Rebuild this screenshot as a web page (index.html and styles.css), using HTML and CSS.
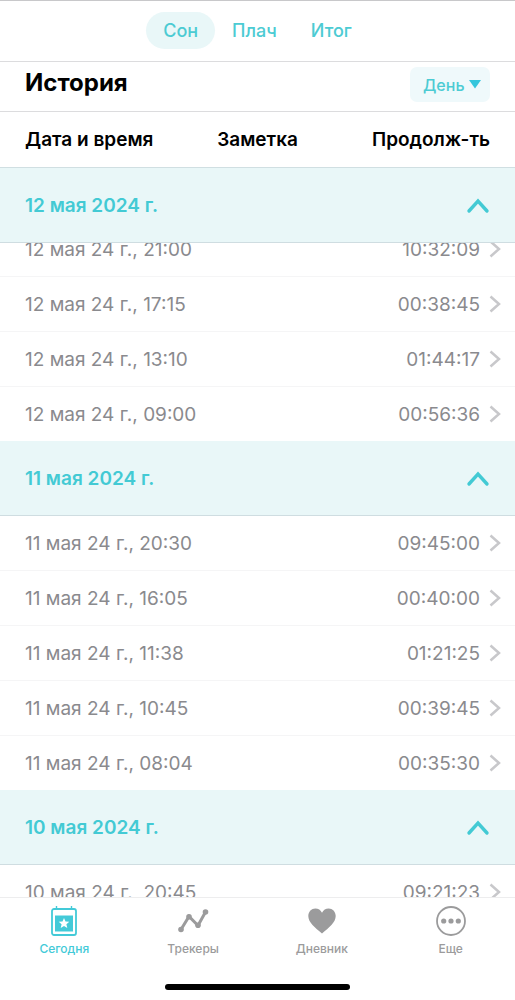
FILE: index.html
```html
<!DOCTYPE html>
<html lang="ru">
<head>
<meta charset="utf-8">
<meta name="viewport" content="width=device-width, initial-scale=1">
<title>История</title>
<link rel="stylesheet" href="styles.css">
</head>
<body>
<svg class="defs" aria-hidden="true">
  <symbol id="up" viewBox="0 0 24 18"><path d="M3 15 12 5 21 15" fill="none" stroke="currentColor" stroke-width="3.400" stroke-linecap="round"/></symbol>
  <symbol id="next" viewBox="0 0 12 18"><path d="M1.500 1.500 10 9 1.500 16.500" fill="none" stroke="currentColor" stroke-width="2.500"/></symbol>
</svg>
<div class="app">
  <nav class="tabs">
    <button class="tab tab-active" type="button">Сон</button>
    <button class="tab" type="button">Плач</button>
    <button class="tab" type="button">Итог</button>
  </nav>
  <header class="heading">
    <h1 class="title">История</h1>
    <div class="period">
      <select class="period-select" aria-label="Период"><option>День</option></select>
      <svg class="period-arrow" viewBox="0 0 12 10" aria-hidden="true"><path d="M0 1h12L6 9.500z" fill="currentColor"/></svg>
    </div>
  </header>
  <main class="history">
    <table class="log">
      <thead>
        <tr class="columns"><th>Дата и время</th><th>Заметка</th><th class="right">Продолж-ть</th></tr>
      </thead>
      <tbody class="group group-scrolled">
        <tr class="day"><th colspan="3"><button class="day-button" type="button">12 мая 2024 г.<svg class="up"><use href="#up"/></svg></button></th></tr>
        <tr class="entry"><td>12 мая 24 г., 21:00</td><td></td><td class="duration">10:32:09<svg class="next"><use href="#next"/></svg></td></tr>
        <tr class="entry"><td>12 мая 24 г., 17:15</td><td></td><td class="duration">00:38:45<svg class="next"><use href="#next"/></svg></td></tr>
        <tr class="entry"><td>12 мая 24 г., 13:10</td><td></td><td class="duration">01:44:17<svg class="next"><use href="#next"/></svg></td></tr>
        <tr class="entry"><td>12 мая 24 г., 09:00</td><td></td><td class="duration">00:56:36<svg class="next"><use href="#next"/></svg></td></tr>
      </tbody>
      <tbody class="group">
        <tr class="day"><th colspan="3"><button class="day-button" type="button">11 мая 2024 г.<svg class="up"><use href="#up"/></svg></button></th></tr>
        <tr class="entry"><td>11 мая 24 г., 20:30</td><td></td><td class="duration">09:45:00<svg class="next"><use href="#next"/></svg></td></tr>
        <tr class="entry"><td>11 мая 24 г., 16:05</td><td></td><td class="duration">00:40:00<svg class="next"><use href="#next"/></svg></td></tr>
        <tr class="entry"><td>11 мая 24 г., 11:38</td><td></td><td class="duration">01:21:25<svg class="next"><use href="#next"/></svg></td></tr>
        <tr class="entry"><td>11 мая 24 г., 10:45</td><td></td><td class="duration">00:39:45<svg class="next"><use href="#next"/></svg></td></tr>
        <tr class="entry"><td>11 мая 24 г., 08:04</td><td></td><td class="duration">00:35:30<svg class="next"><use href="#next"/></svg></td></tr>
      </tbody>
      <tbody class="group">
        <tr class="day"><th colspan="3"><button class="day-button" type="button">10 мая 2024 г.<svg class="up"><use href="#up"/></svg></button></th></tr>
        <tr class="entry"><td>10 мая 24 г., 20:45</td><td></td><td class="duration">09:21:23<svg class="next"><use href="#next"/></svg></td></tr>
      </tbody>
    </table>
  </main>
  <footer class="bottom">
    <nav class="menu">
      <a class="menu-item menu-active" href="#today">
        <svg class="menu-icon" viewBox="0 0 32 32" aria-hidden="true"><rect x="4" y="4" width="24" height="26" rx="2" fill="none" stroke="currentColor" stroke-width="1.800"/><path d="M8.500 1v4M23.500 1v4" stroke="currentColor" stroke-width="1.400"/><path d="M7 10.500h18v16H7z" fill="currentColor"/><path d="m16 13 1.500 3.500 3.800.3-2.900 2.500.9 3.700-3.300-2-3.300 2 .9-3.700-2.900-2.500 3.800-.3z" fill="#fff"/></svg>
        Сегодня
      </a>
      <a class="menu-item" href="#trackers">
        <svg class="menu-icon" viewBox="0 0 32 32" aria-hidden="true"><path d="m4 24.500 8-13 9 9L28.500 7" fill="none" stroke="currentColor" stroke-width="3"/><g fill="currentColor"><circle cx="4" cy="24.500" r="2.800"/><circle cx="12" cy="11.700" r="2.800"/><circle cx="21" cy="20.300" r="2.800"/><circle cx="28.500" cy="7" r="2.800"/></g></svg>
        Трекеры
      </a>
      <a class="menu-item" href="#diary">
        <svg class="menu-icon" viewBox="0 0 32 32" aria-hidden="true"><path d="M16 28.500C9 22.500 2.300 17.500 2.300 11 2.300 6.500 5.600 3.500 9.300 3.500c3 0 5.400 1.500 6.700 4.300 1.300-2.800 3.700-4.300 6.700-4.300 3.700 0 7 3 7 7.500 0 6.500-6.700 11.500-13.700 17.500z" fill="currentColor"/></svg>
        Дневник
      </a>
      <a class="menu-item" href="#more">
        <svg class="menu-icon" viewBox="0 0 32 32" aria-hidden="true"><circle cx="16" cy="16" r="14" fill="none" stroke="currentColor" stroke-width="1.800"/><g fill="currentColor"><circle cx="8.700" cy="16" r="2.600"/><circle cx="16" cy="16" r="2.600"/><circle cx="23.300" cy="16" r="2.600"/></g></svg>
        Еще
      </a>
    </nav>
    <div class="home-bar"></div>
  </footer>
</div>
</body>
</html>
```
FILE: styles.css
```css
* { box-sizing: border-box; }

body {
  margin: 0;
  background: #fff;
  color: #000;
  font-family: Inter, "Liberation Sans", sans-serif;
}

button, select { font: inherit; color: inherit; border: 0; cursor: pointer; }

.defs { display: none; }

.app {
  display: flex;
  flex-direction: column;
  height: 100vh;
  border-top: 1px solid #c8c8ca;
}

.tabs {
  display: flex;
  justify-content: center;
  padding: 11px 0 12px;
  border-bottom: 1px solid #dcdcde;
  color: #4ccbd3;
  font-size: 18px;
  font-weight: 500;
}

.tab {
  padding: 0 17px;
  line-height: 37px;
  border-radius: 19px;
  background: none;
}

.tab-active { background: #e9f7f8; }

.heading {
  display: flex;
  justify-content: space-between;
  align-items: flex-start;
  padding: 5px 25px 9px;
  border-bottom: 1px solid #dcdcde;
}

.title { margin: 0; font-size: 24px; line-height: 32px; font-weight: 700; }

.period { position: relative; color: #4ccbd3; }

.period-select {
  display: block;
  appearance: none;
  height: 35px;
  padding: 0 25px 0 13px;
  border-radius: 7px;
  background: #eff9fb;
  font-size: 16px;
  font-weight: 500;
}

.period-arrow {
  position: absolute;
  right: 9px;
  top: 12px;
  width: 12px;
  height: 10px;
  color: #35c6dc;
  pointer-events: none;
}

.history { flex: 1; min-height: 0; overflow: hidden; }

.log, .log thead, .group { display: block; }

.log th, .log td { padding: 0; text-align: left; }

.columns, .entry {
  display: grid;
  grid-template-columns: 1fr auto 1fr;
  align-items: center;
}

.columns {
  height: 56px;
  padding: 0 25px;
  border-bottom: 1px solid #d0dfe2;
  font-size: 19px;
}

.columns th { font-weight: 600; }

.columns .right { text-align: right; }

.day { display: block; position: relative; z-index: 1; }

.day th { display: block; }

.day-button {
  display: flex;
  justify-content: space-between;
  align-items: center;
  width: 100%;
  height: 75px;
  padding: 0 25px;
  border-bottom: 1px solid #cfdde1;
  background: #e9f7f8;
  color: #43cad4;
  font-size: 19px;
  font-weight: 600;
}

.up { width: 24px; height: 18px; }

.entry {
  height: 55px;
  padding: 0 14px 0 25px;
  border-bottom: 1px solid #f5f5f6;
  color: #8a8a8e;
  font-size: 19px;
}

.entry:last-child { height: 54px; border-bottom: 0; }

/* the first entry is partly scrolled under the day header */
.group-scrolled .day + .entry { margin-top: -21px; }

.entry .duration {
  display: flex;
  justify-content: flex-end;
  align-items: center;
  gap: 9px;
}

.next { width: 12px; height: 18px; color: #c8c8cb; }

.bottom {
  padding: 7px 0 10px;
  border-top: 1px solid #ededee;
  background: #fff;
}

.menu { display: grid; grid-template-columns: repeat(4, 1fr); }

.menu-item {
  display: flex;
  flex-direction: column;
  align-items: center;
  gap: 4px;
  color: #9b9b9c;
  font-size: 12px;
  line-height: 16px;
  font-weight: 500;
  text-decoration: none;
}

.menu-active { color: #43cad8; }

.menu-icon { width: 32px; height: 32px; }

.home-bar {
  width: 36%;
  height: 6px;
  margin: 27px auto 0;
  border-radius: 3px;
  background: #000;
}
```
